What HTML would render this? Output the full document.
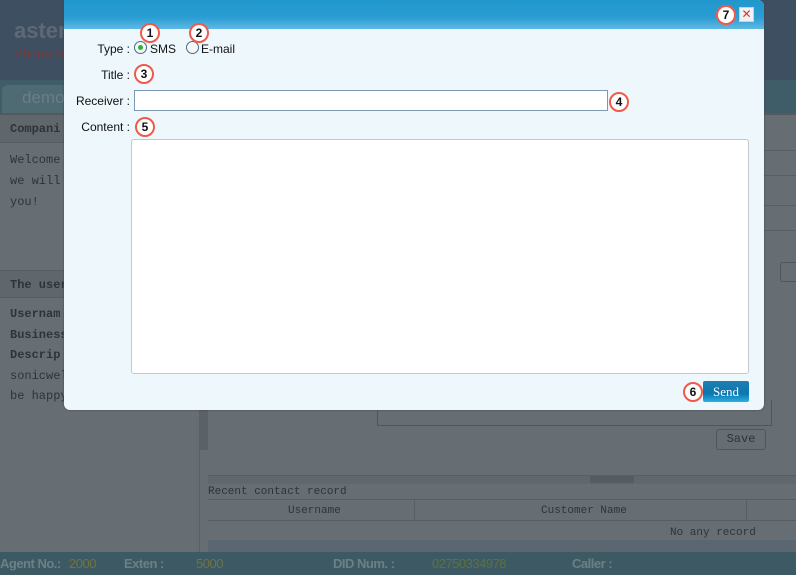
<!DOCTYPE html>
<html><head><meta charset="utf-8"><style>
*{margin:0;padding:0;box-sizing:border-box}
body{width:796px;height:575px;overflow:hidden;position:relative;background:#676e73;font-family:"Liberation Sans",sans-serif}
.a{position:absolute}
.mono{font-family:"Liberation Mono",monospace;color:#2e3337;font-size:12px}
.num{position:absolute;width:20px;height:20px;border:2px solid #f05a4a;border-radius:50%;background:#fff;font:bold 12px "Liberation Sans",sans-serif;color:#111;text-align:center;line-height:16px}
.lbl{position:absolute;font-size:12px;color:#111;text-align:right}
</style></head><body>
<div class="a" style="left:0;top:0;width:796px;height:80px;background:#3d4f61"></div>
<div class="a" style="left:14px;top:18px;font:bold 22px 'Liberation Sans';color:#5d6a75">asterisk</div>
<div class="a" style="left:14px;top:46px;font-size:13px;color:#7a3a3a">Phone Sys</div>
<div class="a" style="left:0;top:80px;width:796px;height:33px;background:#3f5d68"></div>
<div class="a" style="left:2px;top:85px;width:200px;height:28px;background:#4e6a72;border-radius:6px 6px 0 0"></div>
<div class="a" style="left:22px;top:88px;font-size:17px;color:#6d7d85">demo</div>
<div class="a" style="left:0;top:113px;width:796px;height:2px;background:#55595c"></div>
<div class="a" style="left:0;top:115px;width:200px;height:437px;background:#676e73;border-right:1px solid #5a6065"></div>
<div class="a" style="left:0;top:115px;width:200px;height:28px;background:#60676c;border-bottom:1px solid #575d61"></div>
<div class="a mono" style="left:10px;top:122px;font-weight:bold">Compani</div>
<div class="a mono" style="left:10px;top:150px;line-height:21px">Welcome t<br>we will b<br>you!</div>
<div class="a" style="left:0;top:270px;width:200px;height:28px;background:#60676c;border-top:1px solid #575d61;border-bottom:1px solid #575d61"></div>
<div class="a mono" style="left:10px;top:278px;font-weight:bold">The user</div>
<div class="a mono" style="left:10px;top:304px;line-height:20.5px"><b>Usernam</b><br><b>Business</b><br><b>Descrip</b><br>sonicwell<br>be happy</div>
<div class="a" style="left:200px;top:380px;width:8px;height:70px;background:#5b6166"></div>
<div class="a" style="left:764px;top:150px;width:32px;height:1px;background:#585e62"></div>
<div class="a" style="left:764px;top:175px;width:32px;height:1px;background:#585e62"></div>
<div class="a" style="left:764px;top:205px;width:32px;height:1px;background:#585e62"></div>
<div class="a" style="left:764px;top:230px;width:32px;height:1px;background:#585e62"></div>
<div class="a" style="left:780px;top:262px;width:20px;height:20px;border:1px solid #4f5559;border-radius:3px"></div>
<div class="a" style="left:377px;top:400px;width:395px;height:26px;border:1px solid #4f5559;border-top:none"></div>
<div class="a mono" style="left:716px;top:429px;width:50px;height:21px;border:1px solid #4f5559;border-radius:3px;text-align:center;line-height:19px;font-size:12px">Save</div>
<div class="a" style="left:208px;top:475px;width:588px;height:9px;background:#61686d;border-top:1px solid #575d61"></div>
<div class="a" style="left:590px;top:476px;width:44px;height:7px;background:#565c61"></div>
<div class="a mono" style="left:208px;top:486px;font-size:11px">Recent contact record</div>
<div class="a" style="left:208px;top:499px;width:588px;height:1px;background:#575d61"></div>
<div class="a mono" style="left:288px;top:505px;font-size:11px">Username</div>
<div class="a" style="left:414px;top:500px;width:1px;height:20px;background:#575d61"></div>
<div class="a" style="left:746px;top:500px;width:1px;height:20px;background:#575d61"></div>
<div class="a mono" style="left:541px;top:505px;font-size:11px">Customer Name</div>
<div class="a" style="left:208px;top:520px;width:588px;height:1px;background:#575d61"></div>
<div class="a mono" style="left:670px;top:527px;font-size:11px">No any record</div>
<div class="a" style="left:208px;top:540px;width:588px;height:12px;background:#5a6670"></div>
<div class="a" style="left:0;top:552px;width:796px;height:23px;background:#3d5a64"></div>
<div class="a" style="left:0;top:556px;font:bold 13px 'Liberation Sans';color:#6d7f86;letter-spacing:-0.5px;width:796px;white-space:nowrap">
<span class="a" style="left:0">Agent No.:</span><span class="a" style="left:69px;color:#6f7440;font-weight:normal">2000</span>
<span class="a" style="left:124px">Exten :</span><span class="a" style="left:196px;color:#6f7440;font-weight:normal">5000</span>
<span class="a" style="left:333px">DID Num. :</span><span class="a" style="left:432px;color:#5f7040;font-weight:normal">02750334978</span>
<span class="a" style="left:572px">Caller :</span></div>

<div class="a" style="left:64px;top:0;width:700px;height:410px;background:#eef7fc;border-radius:0 6px 6px 6px;box-shadow:0 0 2px #445"></div>
<div class="a" style="left:64px;top:0;width:700px;height:29px;background:linear-gradient(#2097cc,#2a9dd3 60%,#5fb9e2);border-radius:0 6px 0 0"></div>
<div class="a" style="left:739px;top:7px;width:15px;height:15px;background:#eef1f4;border:1px solid #c8d0d8;color:#d33;font-size:12px;line-height:12px;text-align:center">✕</div>
<div class="num" style="left:716px;top:5px">7</div>

<div class="lbl" style="left:70px;width:60px;top:42px">Type :</div>
<div class="a" style="left:134px;top:41px;width:13px;height:13px;border:1px solid #4a6a88;border-radius:50%;background:#f4f6f8"></div>
<div class="a" style="left:138px;top:45px;width:5px;height:5px;border-radius:50%;background:#2cb52c"></div>
<div class="a" style="left:150px;top:42px;font-size:12px;color:#111">SMS</div>
<div class="a" style="left:186px;top:41px;width:13px;height:13px;border:1px solid #4a6a88;border-radius:50%;background:#f4f6f8"></div>
<div class="a" style="left:201px;top:42px;font-size:12px;color:#111">E-mail</div>
<div class="num" style="left:140px;top:23px">1</div>
<div class="num" style="left:189px;top:23px">2</div>

<div class="lbl" style="left:70px;width:60px;top:68px">Title :</div>
<div class="num" style="left:134px;top:64px">3</div>

<div class="lbl" style="left:60px;width:70px;top:94px">Receiver :</div>
<div class="a" style="left:134px;top:90px;width:474px;height:21px;background:#fff;border:1px solid #7e97b3"></div>
<div class="num" style="left:609px;top:92px">4</div>

<div class="lbl" style="left:60px;width:70px;top:120px">Content :</div>
<div class="num" style="left:135px;top:117px">5</div>
<div class="a" style="left:131px;top:139px;width:618px;height:235px;background:#fff;border:1px solid #c4c9cc;border-radius:3px"></div>

<div class="num" style="left:683px;top:382px">6</div>
<div class="a" style="left:703px;top:381px;width:46px;height:21px;background:linear-gradient(#1f7fb0,#0b76b0 60%,#2bb0e0);border-radius:2px;color:#fff;font:13px 'Liberation Serif',serif;text-align:center;line-height:21px">Send</div>
</body></html>
